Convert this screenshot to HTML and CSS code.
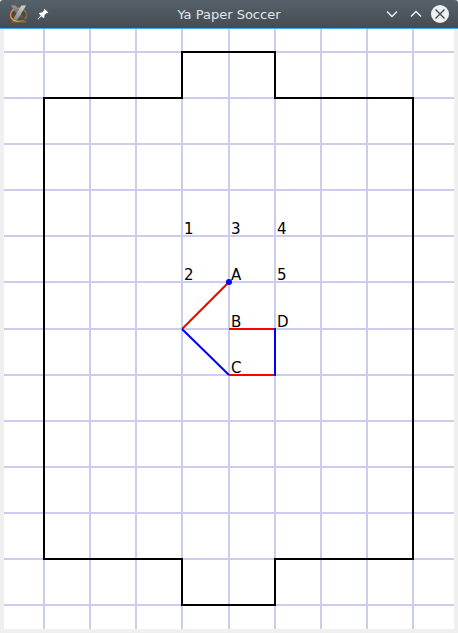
FILE: index.html
```html
<!DOCTYPE html>
<html lang="en">
<head>
<meta charset="utf-8">
<title>Ya Paper Soccer</title>
<link rel="stylesheet" href="styles.css">
</head>
<body>
<div class="window">
  <header class="titlebar">
    <div class="side">
      <svg class="app-icon" viewBox="0 0 20 20" aria-hidden="true">
        <defs>
          <linearGradient id="ring" x1="0" y1="0" x2="1" y2="0">
            <stop offset="0" stop-color="#f07a28"/>
            <stop offset=".3" stop-color="#f8b444"/>
            <stop offset=".65" stop-color="#a07c3c"/>
            <stop offset="1" stop-color="#8a6c3c"/>
          </linearGradient>
          <linearGradient id="steel" x1="0" y1="0" x2="0" y2="1">
            <stop offset="0" stop-color="#9b9997"/>
            <stop offset="1" stop-color="#4a4846"/>
          </linearGradient>
          <linearGradient id="silver" x1="0" y1="0" x2="0" y2="1">
            <stop offset="0" stop-color="#d0d0d0"/>
            <stop offset="1" stop-color="#8a8886"/>
          </linearGradient>
        </defs>
        <ellipse cx="10" cy="11" rx="8.500" ry="7" fill="#4a4846" stroke="url(#ring)" stroke-width="1.600"/>
        <path d="M2 1h5l10 15h-5z" fill="url(#steel)"/>
        <path d="M18 1h-5L4 16h5z" fill="url(#silver)"/>
        <path d="M3 18.300h5M12 18.300h6" stroke="#91782a" stroke-width="1.500"/>
      </svg>
      <button class="tool" type="button" aria-label="Keep on all desktops">
        <svg class="pin" viewBox="0 0 12 12" aria-hidden="true">
          <path d="M7.500 .8 11.300 4.500 10.300 5.200 9.700 4.900 7.500 7.100 7.300 9.500 6.300 10 4.400 8.200 1 11.500 .5 11 3.800 7.600 2 5.700 2.600 4.800 5 4.600 7.200 2.300 6.800 1.500Z"/>
        </svg>
      </button>
    </div>
    <h1 class="title">Ya Paper Soccer</h1>
    <div class="side side-end">
      <button class="tool" type="button" aria-label="Minimize">
        <svg class="chevron" viewBox="0 0 12 12" aria-hidden="true"><path d="M1 3.500 6 8.500 11 3.500"/></svg>
      </button>
      <button class="tool" type="button" aria-label="Maximize">
        <svg class="chevron" viewBox="0 0 12 12" aria-hidden="true"><path d="M1 8.500 6 3.500 11 8.500"/></svg>
      </button>
      <button class="tool close-button" type="button" aria-label="Close">
        <svg class="close" viewBox="0 0 18 18" aria-hidden="true"><circle cx="9" cy="9" r="9"/><path d="M4.500 4.500l9 9M13.500 4.500l-9 9"/></svg>
      </button>
    </div>
  </header>
  <main class="field">
    <svg class="board" viewBox="0 0 450 600" role="img" aria-label="Paper soccer field">
      <path class="grid" d="M40 0V600M86 0V600M132 0V600M178 0V600M225 0V600M271 0V600M317 0V600M363 0V600M409 0V600M0 23H450M0 69H450M0 115H450M0 161H450M0 207H450M0 253H450M0 300H450M0 346H450M0 392H450M0 438H450M0 484H450M0 530H450M0 576H450"/>
      <path class="border" d="M40 69H178V23H271V69H409V530H271V576H178V530H40Z"/>
      <path class="red" d="M225 253 178 300M225 300H271M225 346H271"/>
      <path class="blue" d="M178 300 225 346M271 299V347"/>
      <circle class="ball" cx="225" cy="253" r="3"/>
      <g class="labels">
        <text x="180" y="205">1</text>
        <text x="227" y="205">3</text>
        <text x="273" y="205">4</text>
        <text x="180" y="251">2</text>
        <text x="227" y="251">A</text>
        <text x="273" y="251">5</text>
        <text x="227" y="298">B</text>
        <text x="273" y="298">D</text>
        <text x="227" y="344">C</text>
      </g>
    </svg>
  </main>
</div>
</body>
</html>
```
FILE: styles.css
```css
* {
  box-sizing: border-box;
}

body {
  margin: 0;
  background: #efefef;
  font-family: "DejaVu Sans", sans-serif;
}

.titlebar {
  display: grid;
  grid-template-columns: 1fr auto 1fr;
  align-items: center;
  height: 29px;
  padding: 0 9px;
  border-bottom: 1px solid #3daee9;
  border-radius: 3px 3px 0 0;
  background: linear-gradient(#566169, #444c53);
  color: #e3e5e7;
}

.side {
  display: flex;
  align-items: center;
  gap: 9px;
}

.side-end {
  justify-content: flex-end;
  gap: 12px;
}

.title {
  margin: 0;
  padding-top: 2px;
  font-size: 13px;
  font-weight: 400;
  line-height: 26px;
}

.tool {
  display: flex;
  padding: 0;
  border: 0;
  background: none;
}

.close-button {
  margin-left: -3px;
}

.app-icon {
  width: 19px;
  height: 20px;
}

.pin {
  width: 12px;
  height: 12px;
  fill: #fcfcfc;
}

.chevron {
  width: 12px;
  height: 12px;
  fill: none;
  stroke: #eff0f1;
  stroke-width: 1.4;
}

.close {
  width: 18px;
  height: 18px;
  fill: #eff0f1;
  stroke-width: 1.4;
}

.close path {
  stroke: #3f484f;
}

.field {
  padding: 0 4px 4px;
}

.board {
  display: block;
  width: 100%;
  background: #fff;
  fill: none;
  stroke-width: 2;
}

.grid {
  stroke: #ccccee;
}

.border {
  stroke: #000;
}

.red {
  stroke: #f00;
}

.blue {
  stroke: #00f;
}

.ball {
  fill: #00f;
}

.labels {
  fill: #000;
  font-size: 15px;
}
```
